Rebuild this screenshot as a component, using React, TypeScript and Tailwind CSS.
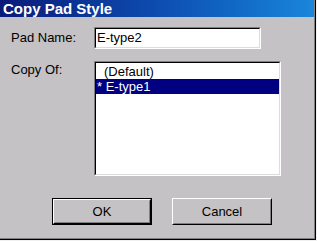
import React from "react";

const FONT = { fontFamily: '"Liberation Sans", Arial, sans-serif' };

function Sunken({ className, children }: { className: string; children?: React.ReactNode }) {
  return (
    <div className={`border border-t-[#808080] border-l-[#808080] border-b-white border-r-white ${className}`}>
      <div className="h-full w-full border border-t-black border-l-black border-b-[#dcdcdc] border-r-[#dcdcdc] bg-white">
        {children}
      </div>
    </div>
  );
}

function Button({ label, primary }: { label: string; primary?: boolean }) {
  const face = (
    <div className="flex h-full w-full items-center justify-center border border-t-white border-l-white border-b-black border-r-black">
      <div className="flex h-full w-full items-center justify-center border border-t-transparent border-l-transparent border-b-[#808080] border-r-[#808080] text-[13px] text-black">
        {label}
      </div>
    </div>
  );
  return primary ? (
    <div className="h-[27px] w-[100px] border border-black">{face}</div>
  ) : (
    <div className="h-[27px] w-[100px]">{face}</div>
  );
}

export default function App() {
  return (
    <div className="h-[241px] w-[317px] bg-[#f0f0f0]" style={FONT}>
      <div className="h-[240px] w-[316px] border-r border-b border-black">
        <div className="flex h-full w-full flex-col border-r border-b border-[#808080] bg-[#c4c2c4]">
          {/* title bar */}
          <div className="flex h-[17px] items-center bg-gradient-to-r from-[#0a1a7a] via-[#0e4cb0] to-[#1a86da] pl-[3px]">
            <span className="text-[15px] font-bold leading-none text-white">Copy Pad Style</span>
          </div>

          <div className="flex flex-col pl-[11px]">
            <div className="mt-[10px] flex items-center">
              <span className="w-[83px] text-[13px] text-black">Pad Name:</span>
              <Sunken className="h-[22px] w-[167px]">
                <div className="flex h-full items-center pl-[1px] text-[13px] text-black">E-type2</div>
              </Sunken>
            </div>

            <div className="mt-[12px] flex items-start">
              <span className="w-[83px] pt-px text-[13px] leading-[15px] text-black">Copy Of:</span>
              <Sunken className="h-[115px] w-[187px]">
                <div className="flex flex-col text-[13px] leading-[15px]">
                  <div className="h-[16px] pl-[8px] pt-px text-black">(Default)</div>
                  <div className="h-[15px] bg-[#000080] pl-px text-white">* E-type1</div>
                </div>
              </Sunken>
            </div>
          </div>

          <div className="mt-[22px] flex gap-[20px] pl-[52px]">
            <Button label="OK" primary />
            <Button label="Cancel" />
          </div>
        </div>
      </div>
    </div>
  );
}
